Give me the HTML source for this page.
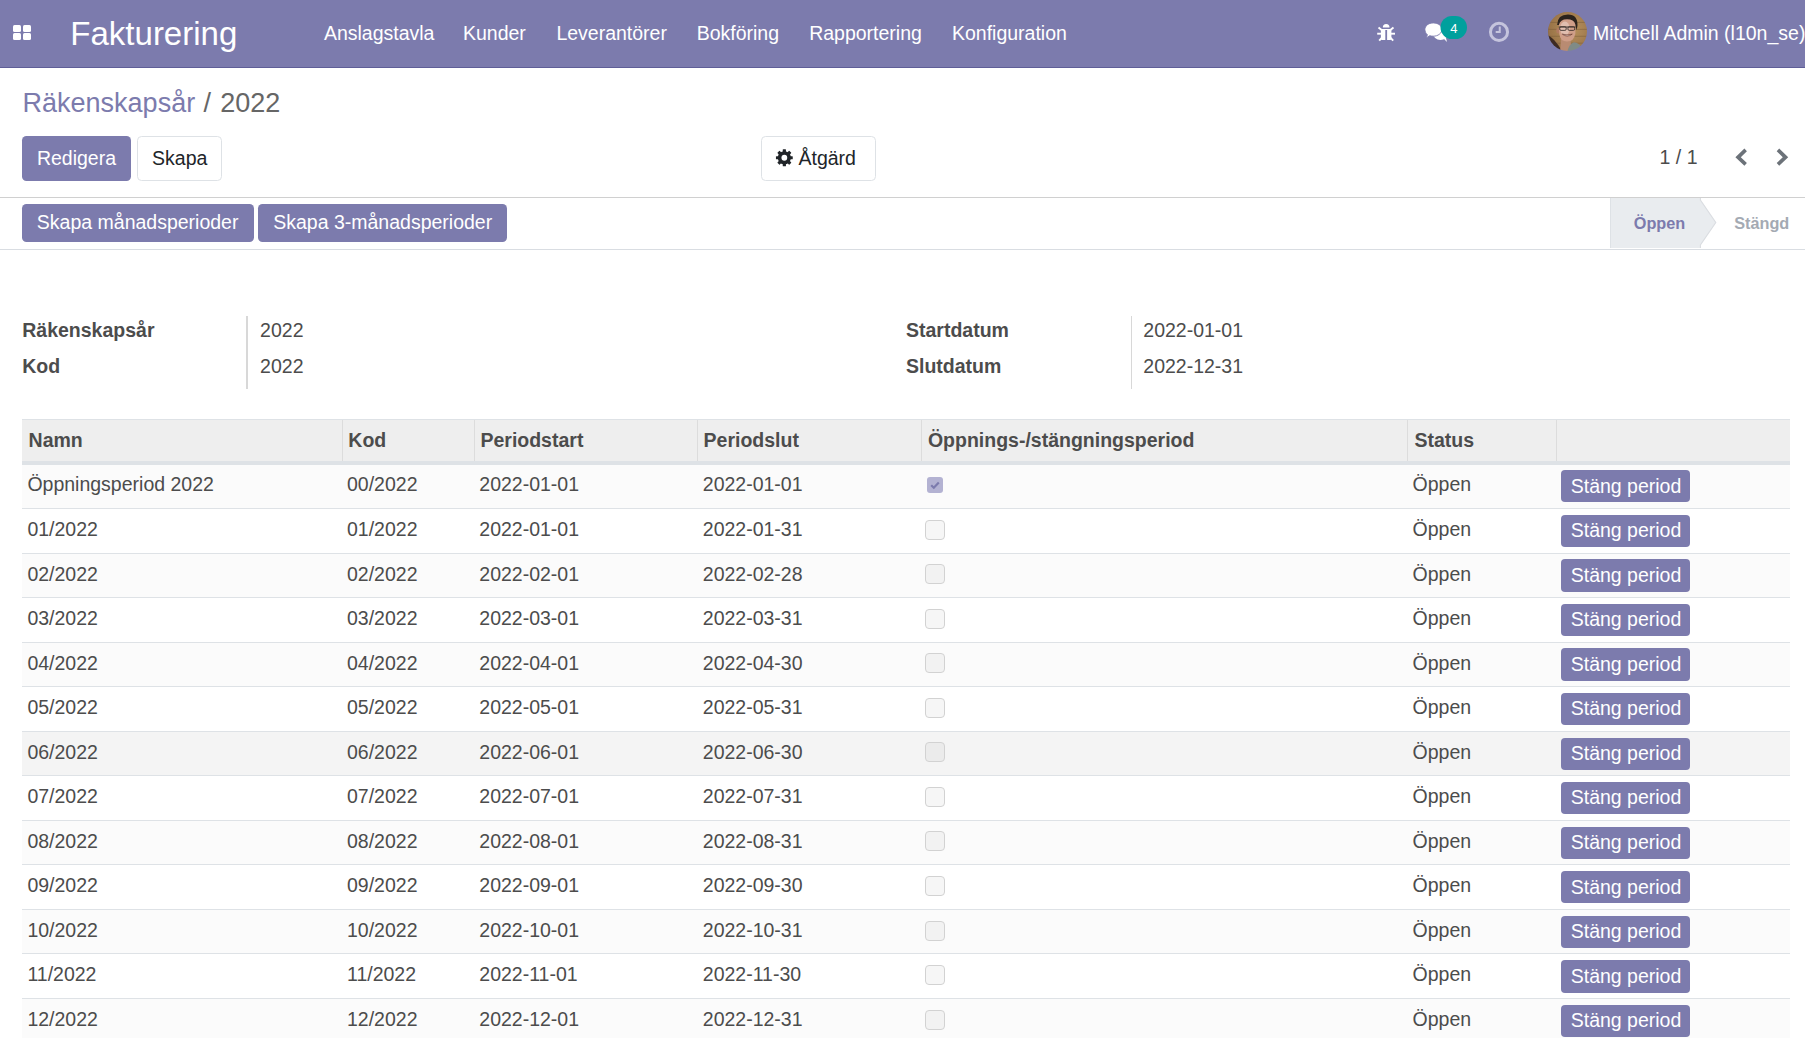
<!DOCTYPE html>
<html><head><meta charset="utf-8"><style>
html,body{margin:0;padding:0;background:#fff;width:1805px;height:1038px;overflow:hidden;position:relative}
body{font-family:"Liberation Sans",sans-serif}
.t{position:absolute;white-space:nowrap}
.r{position:absolute}
</style></head><body>
<div class="r" style="left:0px;top:0px;width:1805.00px;height:67.00px;background:#7c7bad"></div>
<div class="r" style="left:0px;top:67px;width:1805.00px;height:1.00px;background:#5f5e97"></div>
<div class="r" style="left:12.8px;top:24.9px;width:8.60px;height:6.90px;background:#fff;border-radius:1.5px"></div>
<div class="r" style="left:22.9px;top:24.9px;width:8.60px;height:6.90px;background:#fff;border-radius:1.5px"></div>
<div class="r" style="left:12.8px;top:33.1px;width:8.60px;height:6.90px;background:#fff;border-radius:1.5px"></div>
<div class="r" style="left:22.9px;top:33.1px;width:8.60px;height:6.90px;background:#fff;border-radius:1.5px"></div>
<div class="t" style="left:70.35px;top:14.00px;font-size:33px;line-height:39.6px;color:#fff;">Fakturering</div>
<div class="t" style="left:323.90px;top:22.00px;font-size:19.5px;line-height:23.4px;color:#fff;">Anslagstavla</div>
<div class="t" style="left:462.98px;top:22.00px;font-size:19.5px;line-height:23.4px;color:#fff;">Kunder</div>
<div class="t" style="left:556.38px;top:22.00px;font-size:19.5px;line-height:23.4px;color:#fff;">Leverantörer</div>
<div class="t" style="left:696.67px;top:22.00px;font-size:19.5px;line-height:23.4px;color:#fff;">Bokföring</div>
<div class="t" style="left:809.17px;top:22.00px;font-size:19.5px;line-height:23.4px;color:#fff;">Rapportering</div>
<div class="t" style="left:951.98px;top:22.00px;font-size:19.5px;line-height:23.4px;color:#fff;">Konfiguration</div>
<div class="t" style="left:1592.97px;top:22.00px;font-size:19.5px;line-height:23.4px;color:#fff;white-space:nowrap">Mitchell Admin (l10n_se)</div>
<svg class="r" style="left:1372px;top:18px" width="28" height="28" viewBox="0 0 28 28"><path d="M10.8 9.6 A3.35 3.6 0 0 1 17.5 9.6 Z" fill="#fff"/><path d="M8.9 10.9 H19.4 V20.6 Q19.4 21.9 18.3 21.9 H9.9 Q8.9 21.9 8.9 20.6 Z" fill="#fff"/><rect x="13.3" y="12" width="1.8" height="10" fill="#7c7bad"/><g stroke="#fff" stroke-width="1.9" stroke-linecap="butt"><line x1="6.5" y1="9.4" x2="10" y2="12.2"/><line x1="21.5" y1="9.4" x2="18" y2="12.2"/><line x1="5.2" y1="15.7" x2="9.5" y2="15.7"/><line x1="23" y1="15.7" x2="18.8" y2="15.7"/><line x1="7.2" y1="22.6" x2="10" y2="19.6"/><line x1="21.2" y1="22.6" x2="18.4" y2="19.6"/></g></svg>
<svg class="r" style="left:1420px;top:14px" width="50" height="32" viewBox="0 0 50 32"><ellipse cx="20.5" cy="19.6" rx="7.6" ry="6.3" fill="#fff"/><path d="M23 24 L27 28 L25.5 22 Z" fill="#fff"/><path d="M13.2 8.9 C18.5 8.9 21.9 11.9 21.9 15.5 C21.9 19.3 18 22.2 13.2 22.2 C12 22.2 10.8 22 9.7 21.7 L6.3 23.9 L7.4 20.7 C5.9 19.4 4.9 17.6 4.9 15.5 C4.9 11.9 8.5 8.9 13.2 8.9 Z" fill="#fff" stroke="#7c7bad" stroke-width="0.9"/><rect x="20.5" y="2" width="26.5" height="23" rx="11.5" fill="#00a09d"/><text x="33.9" y="18.6" text-anchor="middle" font-family="Liberation Sans" font-size="13" fill="#fff">4</text></svg>
<svg class="r" style="left:1484px;top:17px" width="30" height="30" viewBox="0 0 30 30"><circle cx="15" cy="14.9" r="8.55" fill="none" stroke="#c5c4dd" stroke-width="3"/><path d="M15.75 9.4 V15.1 H11.7" fill="none" stroke="#c5c4dd" stroke-width="2"/></svg>
<svg class="r" style="left:1548px;top:11.7px" width="39" height="39" viewBox="0 0 45 45"><defs><clipPath id="av"><circle cx="22.5" cy="22.5" r="22.5"/></clipPath><radialGradient id="avbg" cx="0.6" cy="0.45" r="0.7"><stop offset="0" stop-color="#b8925e"/><stop offset="0.75" stop-color="#9a7448"/><stop offset="1" stop-color="#5e4128"/></radialGradient><filter id="bl" x="-10%" y="-10%" width="120%" height="120%"><feGaussianBlur stdDeviation="0.8"/></filter></defs><g clip-path="url(#av)"><g filter="url(#bl)"><rect x="-2" y="-2" width="49" height="49" fill="url(#avbg)"/><g stroke="#7a5a38" stroke-width="1" opacity="0.6"><line x1="0" y1="12" x2="45" y2="12"/><line x1="0" y1="20" x2="45" y2="20"/><line x1="0" y1="28" x2="45" y2="28"/><line x1="0" y1="36" x2="45" y2="36"/></g><path d="M-2 26 Q8 30 16 45 H-2 Z" fill="#3e2c20"/><path d="M15 30 H26 L27 47 H14 Z" fill="#b98b72"/><path d="M22 47 Q24 37 30 35 Q37 35 42 47 Z" fill="#7f8b87"/><ellipse cx="11.5" cy="21.5" rx="2" ry="3.2" fill="#b07a60"/><path d="M12.5 13 Q13 6 22 6 Q31.5 6 32 14 L31.5 25 Q30 34 22 34 Q14 34 13 25 Z" fill="#cf9e88"/><ellipse cx="19.5" cy="19" rx="5.5" ry="8" fill="#e6c8bc" opacity="0.75"/><path d="M10.5 15 Q11 3 23 3 Q34.5 3 34 16 L33 21 L31.5 14 Q30 8.5 22 8.5 Q14 8.5 12.5 15 Z" fill="#2a201b"/><path d="M12.5 17.3 H32" stroke="#3a302c" stroke-width="1.1"/><rect x="13.5" y="17" width="7.5" height="4.2" rx="1.5" fill="none" stroke="#3a302c" stroke-width="1"/><rect x="23" y="17" width="7.8" height="4.2" rx="1.5" fill="none" stroke="#3a302c" stroke-width="1"/><path d="M16.5 25.5 Q22 30 28 25.5 Q22 27.5 16.5 25.5 Z" fill="#f6ece6" stroke="#6a3a30" stroke-width="0.8"/></g></g></svg>
<svg class="r" style="left:772px;top:145.4px;z-index:5" width="25" height="25" viewBox="0 0 25 25"><g fill="#212529" transform="translate(12.35 12.75)"><circle r="6.6"/><rect x="-1.6" y="-8.4" width="3.2" height="4" rx="0.5" transform="rotate(0)"/><rect x="-1.6" y="-8.4" width="3.2" height="4" rx="0.5" transform="rotate(45)"/><rect x="-1.6" y="-8.4" width="3.2" height="4" rx="0.5" transform="rotate(90)"/><rect x="-1.6" y="-8.4" width="3.2" height="4" rx="0.5" transform="rotate(135)"/><rect x="-1.6" y="-8.4" width="3.2" height="4" rx="0.5" transform="rotate(180)"/><rect x="-1.6" y="-8.4" width="3.2" height="4" rx="0.5" transform="rotate(225)"/><rect x="-1.6" y="-8.4" width="3.2" height="4" rx="0.5" transform="rotate(270)"/><rect x="-1.6" y="-8.4" width="3.2" height="4" rx="0.5" transform="rotate(315)"/><circle r="2.9" fill="#fff"/></g></svg>
<svg class="r" style="left:1730px;top:145px" width="65" height="25" viewBox="1730 145 65 25"><polygon points="1735.4,157.2 1744.4,148.6 1746.9,151.2 1740.8,157.2 1746.9,163.1 1744.4,165.8" fill="#6c7279"/><polygon points="1788.2,157.2 1779.2,148.6 1776.7,151.2 1782.8,157.2 1776.7,163.1 1779.2,165.8" fill="#6c7279"/></svg>
<div class="t" style="left:22.55px;top:87.00px;font-size:27px;line-height:32.4px;color:#7c7bad;">Räkenskapsår</div>
<div class="t" style="left:203.60px;top:87.00px;font-size:27px;line-height:32.4px;color:#666666;">/</div>
<div class="t" style="left:220.18px;top:87.00px;font-size:27px;line-height:32.4px;color:#666666;">2022</div>
<div class="r" style="left:22px;top:136px;width:109.00px;height:45.00px;background:#7c7bad;border-radius:4.5px"></div>
<div class="t" style="left:36.88px;top:147.00px;font-size:19.5px;line-height:23.4px;color:#fff;">Redigera</div>
<div class="r" style="left:137px;top:136px;width:85.00px;height:45.00px;background:#fff;border:1px solid #dee2e6;box-sizing:border-box;border-radius:4.5px"></div>
<div class="t" style="left:152.12px;top:147.00px;font-size:19.5px;line-height:23.4px;color:#212529;">Skapa</div>
<div class="r" style="left:761px;top:136px;width:115.00px;height:45.00px;background:#fff;border:1px solid #dee2e6;box-sizing:border-box;border-radius:4.5px"></div>
<div class="t" style="left:798.50px;top:147.00px;font-size:19.5px;line-height:23.4px;color:#212529;">Åtgärd</div>
<div class="t" style="left:1659.60px;top:146.00px;font-size:19.5px;line-height:23.4px;color:#4c4c4c;">1 / 1</div>
<div class="r" style="left:0px;top:197px;width:1805.00px;height:1.00px;background:#d0d0d0"></div>
<div class="r" style="left:0px;top:249px;width:1805.00px;height:1.00px;background:#d9dde2"></div>
<div class="r" style="left:22px;top:204px;width:232.00px;height:38.00px;background:#7c7bad;border-radius:4.5px"></div>
<div class="t" style="left:36.83px;top:211.00px;font-size:19.5px;line-height:23.4px;color:#fff;">Skapa månadsperioder</div>
<div class="r" style="left:258.3px;top:204px;width:248.30px;height:38.00px;background:#7c7bad;border-radius:4.5px"></div>
<div class="t" style="left:273.23px;top:211.00px;font-size:19.5px;line-height:23.4px;color:#fff;">Skapa 3-månadsperioder</div>
<svg class="r" style="left:1600px;top:198px" width="205" height="51"><polygon points="10,0 100.4,0 100.4,2 115.8,24.5 100.4,47 100.4,50 10,50" fill="#e9ecef"/><polyline points="10.5,0 10.5,50" stroke="#dee2e6" stroke-width="1" fill="none"/><polyline points="100.4,0 100.4,2 115.8,24.5 100.4,47 100.4,50" stroke="#dadde1" stroke-width="1.1" fill="none"/></svg>
<div class="t" style="left:1633.78px;top:214.00px;font-size:16.25px;line-height:19.5px;color:#7c7bad;font-weight:bold;">Öppen</div>
<div class="t" style="left:1734.20px;top:214.00px;font-size:16.25px;line-height:19.5px;color:#a4aab3;font-weight:bold;">Stängd</div>
<div class="t" style="left:22.25px;top:319.00px;font-size:19.5px;line-height:23.4px;color:#4c4c4c;font-weight:bold;">Räkenskapsår</div>
<div class="t" style="left:22.25px;top:355.00px;font-size:19.5px;line-height:23.4px;color:#4c4c4c;font-weight:bold;">Kod</div>
<div class="t" style="left:260.10px;top:319.00px;font-size:19.5px;line-height:23.4px;color:#4c4c4c;">2022</div>
<div class="t" style="left:260.10px;top:355.00px;font-size:19.5px;line-height:23.4px;color:#4c4c4c;">2022</div>
<div class="r" style="left:246px;top:316px;width:1.50px;height:73.00px;background:#d8d8d8"></div>
<div class="t" style="left:905.98px;top:319.00px;font-size:19.5px;line-height:23.4px;color:#4c4c4c;font-weight:bold;">Startdatum</div>
<div class="t" style="left:905.98px;top:355.00px;font-size:19.5px;line-height:23.4px;color:#4c4c4c;font-weight:bold;">Slutdatum</div>
<div class="t" style="left:1143.30px;top:319.00px;font-size:19.5px;line-height:23.4px;color:#4c4c4c;">2022-01-01</div>
<div class="t" style="left:1143.30px;top:355.00px;font-size:19.5px;line-height:23.4px;color:#4c4c4c;">2022-12-31</div>
<div class="r" style="left:1130.5px;top:316px;width:1.50px;height:73.00px;background:#d8d8d8"></div>
<div class="r" style="left:22px;top:419px;width:1768.00px;height:42.00px;background:#eeeeee;border-top:1px solid #dee2e6;box-sizing:border-box"></div>
<div class="r" style="left:22px;top:461px;width:1768.00px;height:4.00px;background:#dee2e6"></div>
<div class="r" style="left:342px;top:420px;width:1.00px;height:41.00px;background:#dcdcdc"></div>
<div class="r" style="left:474px;top:420px;width:1.00px;height:41.00px;background:#dcdcdc"></div>
<div class="r" style="left:697px;top:420px;width:1.00px;height:41.00px;background:#dcdcdc"></div>
<div class="r" style="left:921px;top:420px;width:1.00px;height:41.00px;background:#dcdcdc"></div>
<div class="r" style="left:1407px;top:420px;width:1.00px;height:41.00px;background:#dcdcdc"></div>
<div class="r" style="left:1556px;top:420px;width:1.00px;height:41.00px;background:#dcdcdc"></div>
<div class="t" style="left:28.55px;top:429.00px;font-size:19.5px;line-height:23.4px;color:#4c4c4c;font-weight:bold;">Namn</div>
<div class="t" style="left:348.35px;top:429.00px;font-size:19.5px;line-height:23.4px;color:#4c4c4c;font-weight:bold;">Kod</div>
<div class="t" style="left:480.45px;top:429.00px;font-size:19.5px;line-height:23.4px;color:#4c4c4c;font-weight:bold;">Periodstart</div>
<div class="t" style="left:703.55px;top:429.00px;font-size:19.5px;line-height:23.4px;color:#4c4c4c;font-weight:bold;">Periodslut</div>
<div class="t" style="left:927.95px;top:429.00px;font-size:19.5px;line-height:23.4px;color:#4c4c4c;font-weight:bold;">Öppnings-/stängningsperiod</div>
<div class="t" style="left:1414.47px;top:429.00px;font-size:19.5px;line-height:23.4px;color:#4c4c4c;font-weight:bold;">Status</div>
<div class="r" style="left:22px;top:465px;width:1768.00px;height:43.00px;background:#fbfbfb"></div>
<div class="r" style="left:22px;top:508px;width:1768.00px;height:1.00px;background:#dee2e6"></div>
<div class="t" style="left:27.40px;top:473.00px;font-size:19.5px;line-height:23.4px;color:#4c4c4c;">Öppningsperiod 2022</div>
<div class="t" style="left:347.00px;top:473.00px;font-size:19.5px;line-height:23.4px;color:#4c4c4c;">00/2022</div>
<div class="t" style="left:479.30px;top:473.00px;font-size:19.5px;line-height:23.4px;color:#4c4c4c;">2022-01-01</div>
<div class="t" style="left:702.80px;top:473.00px;font-size:19.5px;line-height:23.4px;color:#4c4c4c;">2022-01-01</div>
<div class="t" style="left:1412.60px;top:473.00px;font-size:19.5px;line-height:23.4px;color:#4c4c4c;">Öppen</div>
<svg class="r" style="left:927px;top:477.00px" width="16" height="16"><rect x="0" y="0" width="16" height="16" rx="3" fill="#b3b2d2"/><path d="M4.2 8.3 L6.8 10.8 L11.8 5.6" stroke="#7c7bad" stroke-width="2.2" fill="none"/></svg>
<div class="r" style="left:1561px;top:470.2px;width:129.00px;height:32.30px;background:#7c7bad;border-radius:4px"></div>
<div class="t" style="left:1570.72px;top:475.00px;font-size:19.5px;line-height:23.4px;color:#fff;">Stäng period</div>
<div class="r" style="left:22px;top:509px;width:1768.00px;height:44.00px;background:#ffffff"></div>
<div class="r" style="left:22px;top:553px;width:1768.00px;height:1.00px;background:#dee2e6"></div>
<div class="t" style="left:27.40px;top:518.00px;font-size:19.5px;line-height:23.4px;color:#4c4c4c;">01/2022</div>
<div class="t" style="left:347.00px;top:518.00px;font-size:19.5px;line-height:23.4px;color:#4c4c4c;">01/2022</div>
<div class="t" style="left:479.30px;top:518.00px;font-size:19.5px;line-height:23.4px;color:#4c4c4c;">2022-01-01</div>
<div class="t" style="left:702.80px;top:518.00px;font-size:19.5px;line-height:23.4px;color:#4c4c4c;">2022-01-31</div>
<div class="t" style="left:1412.60px;top:518.00px;font-size:19.5px;line-height:23.4px;color:#4c4c4c;">Öppen</div>
<div class="r" style="left:925px;top:520px;width:19.5px;height:19.5px;box-sizing:border-box;border:1px solid #d2d2d2;border-radius:4px;background:rgba(0,0,0,0.035)"></div>
<div class="r" style="left:1561px;top:514.75px;width:129.00px;height:32.30px;background:#7c7bad;border-radius:4px"></div>
<div class="t" style="left:1570.72px;top:519.00px;font-size:19.5px;line-height:23.4px;color:#fff;">Stäng period</div>
<div class="r" style="left:22px;top:554px;width:1768.00px;height:43.00px;background:#fbfbfb"></div>
<div class="r" style="left:22px;top:597px;width:1768.00px;height:1.00px;background:#dee2e6"></div>
<div class="t" style="left:27.40px;top:563.00px;font-size:19.5px;line-height:23.4px;color:#4c4c4c;">02/2022</div>
<div class="t" style="left:347.00px;top:563.00px;font-size:19.5px;line-height:23.4px;color:#4c4c4c;">02/2022</div>
<div class="t" style="left:479.30px;top:563.00px;font-size:19.5px;line-height:23.4px;color:#4c4c4c;">2022-02-01</div>
<div class="t" style="left:702.80px;top:563.00px;font-size:19.5px;line-height:23.4px;color:#4c4c4c;">2022-02-28</div>
<div class="t" style="left:1412.60px;top:563.00px;font-size:19.5px;line-height:23.4px;color:#4c4c4c;">Öppen</div>
<div class="r" style="left:925px;top:564px;width:19.5px;height:19.5px;box-sizing:border-box;border:1px solid #d2d2d2;border-radius:4px;background:rgba(0,0,0,0.035)"></div>
<div class="r" style="left:1561px;top:559.3px;width:129.00px;height:32.30px;background:#7c7bad;border-radius:4px"></div>
<div class="t" style="left:1570.72px;top:564.00px;font-size:19.5px;line-height:23.4px;color:#fff;">Stäng period</div>
<div class="r" style="left:22px;top:598px;width:1768.00px;height:44.00px;background:#ffffff"></div>
<div class="r" style="left:22px;top:642px;width:1768.00px;height:1.00px;background:#dee2e6"></div>
<div class="t" style="left:27.40px;top:607.00px;font-size:19.5px;line-height:23.4px;color:#4c4c4c;">03/2022</div>
<div class="t" style="left:347.00px;top:607.00px;font-size:19.5px;line-height:23.4px;color:#4c4c4c;">03/2022</div>
<div class="t" style="left:479.30px;top:607.00px;font-size:19.5px;line-height:23.4px;color:#4c4c4c;">2022-03-01</div>
<div class="t" style="left:702.80px;top:607.00px;font-size:19.5px;line-height:23.4px;color:#4c4c4c;">2022-03-31</div>
<div class="t" style="left:1412.60px;top:607.00px;font-size:19.5px;line-height:23.4px;color:#4c4c4c;">Öppen</div>
<div class="r" style="left:925px;top:609px;width:19.5px;height:19.5px;box-sizing:border-box;border:1px solid #d2d2d2;border-radius:4px;background:rgba(0,0,0,0.035)"></div>
<div class="r" style="left:1561px;top:603.8499999999999px;width:129.00px;height:32.30px;background:#7c7bad;border-radius:4px"></div>
<div class="t" style="left:1570.72px;top:608.00px;font-size:19.5px;line-height:23.4px;color:#fff;">Stäng period</div>
<div class="r" style="left:22px;top:643px;width:1768.00px;height:43.00px;background:#fbfbfb"></div>
<div class="r" style="left:22px;top:686px;width:1768.00px;height:1.00px;background:#dee2e6"></div>
<div class="t" style="left:27.40px;top:652.00px;font-size:19.5px;line-height:23.4px;color:#4c4c4c;">04/2022</div>
<div class="t" style="left:347.00px;top:652.00px;font-size:19.5px;line-height:23.4px;color:#4c4c4c;">04/2022</div>
<div class="t" style="left:479.30px;top:652.00px;font-size:19.5px;line-height:23.4px;color:#4c4c4c;">2022-04-01</div>
<div class="t" style="left:702.80px;top:652.00px;font-size:19.5px;line-height:23.4px;color:#4c4c4c;">2022-04-30</div>
<div class="t" style="left:1412.60px;top:652.00px;font-size:19.5px;line-height:23.4px;color:#4c4c4c;">Öppen</div>
<div class="r" style="left:925px;top:653px;width:19.5px;height:19.5px;box-sizing:border-box;border:1px solid #d2d2d2;border-radius:4px;background:rgba(0,0,0,0.035)"></div>
<div class="r" style="left:1561px;top:648.4px;width:129.00px;height:32.30px;background:#7c7bad;border-radius:4px"></div>
<div class="t" style="left:1570.72px;top:653.00px;font-size:19.5px;line-height:23.4px;color:#fff;">Stäng period</div>
<div class="r" style="left:22px;top:687px;width:1768.00px;height:44.00px;background:#ffffff"></div>
<div class="r" style="left:22px;top:731px;width:1768.00px;height:1.00px;background:#dee2e6"></div>
<div class="t" style="left:27.40px;top:696.00px;font-size:19.5px;line-height:23.4px;color:#4c4c4c;">05/2022</div>
<div class="t" style="left:347.00px;top:696.00px;font-size:19.5px;line-height:23.4px;color:#4c4c4c;">05/2022</div>
<div class="t" style="left:479.30px;top:696.00px;font-size:19.5px;line-height:23.4px;color:#4c4c4c;">2022-05-01</div>
<div class="t" style="left:702.80px;top:696.00px;font-size:19.5px;line-height:23.4px;color:#4c4c4c;">2022-05-31</div>
<div class="t" style="left:1412.60px;top:696.00px;font-size:19.5px;line-height:23.4px;color:#4c4c4c;">Öppen</div>
<div class="r" style="left:925px;top:698px;width:19.5px;height:19.5px;box-sizing:border-box;border:1px solid #d2d2d2;border-radius:4px;background:rgba(0,0,0,0.035)"></div>
<div class="r" style="left:1561px;top:692.95px;width:129.00px;height:32.30px;background:#7c7bad;border-radius:4px"></div>
<div class="t" style="left:1570.72px;top:697.00px;font-size:19.5px;line-height:23.4px;color:#fff;">Stäng period</div>
<div class="r" style="left:22px;top:732px;width:1768.00px;height:43.00px;background:#f4f4f4"></div>
<div class="r" style="left:22px;top:775px;width:1768.00px;height:1.00px;background:#dee2e6"></div>
<div class="t" style="left:27.40px;top:741.00px;font-size:19.5px;line-height:23.4px;color:#4c4c4c;">06/2022</div>
<div class="t" style="left:347.00px;top:741.00px;font-size:19.5px;line-height:23.4px;color:#4c4c4c;">06/2022</div>
<div class="t" style="left:479.30px;top:741.00px;font-size:19.5px;line-height:23.4px;color:#4c4c4c;">2022-06-01</div>
<div class="t" style="left:702.80px;top:741.00px;font-size:19.5px;line-height:23.4px;color:#4c4c4c;">2022-06-30</div>
<div class="t" style="left:1412.60px;top:741.00px;font-size:19.5px;line-height:23.4px;color:#4c4c4c;">Öppen</div>
<div class="r" style="left:925px;top:742px;width:19.5px;height:19.5px;box-sizing:border-box;border:1px solid #d2d2d2;border-radius:4px;background:rgba(0,0,0,0.035)"></div>
<div class="r" style="left:1561px;top:737.5px;width:129.00px;height:32.30px;background:#7c7bad;border-radius:4px"></div>
<div class="t" style="left:1570.72px;top:742.00px;font-size:19.5px;line-height:23.4px;color:#fff;">Stäng period</div>
<div class="r" style="left:22px;top:776px;width:1768.00px;height:44.00px;background:#ffffff"></div>
<div class="r" style="left:22px;top:820px;width:1768.00px;height:1.00px;background:#dee2e6"></div>
<div class="t" style="left:27.40px;top:785.00px;font-size:19.5px;line-height:23.4px;color:#4c4c4c;">07/2022</div>
<div class="t" style="left:347.00px;top:785.00px;font-size:19.5px;line-height:23.4px;color:#4c4c4c;">07/2022</div>
<div class="t" style="left:479.30px;top:785.00px;font-size:19.5px;line-height:23.4px;color:#4c4c4c;">2022-07-01</div>
<div class="t" style="left:702.80px;top:785.00px;font-size:19.5px;line-height:23.4px;color:#4c4c4c;">2022-07-31</div>
<div class="t" style="left:1412.60px;top:785.00px;font-size:19.5px;line-height:23.4px;color:#4c4c4c;">Öppen</div>
<div class="r" style="left:925px;top:787px;width:19.5px;height:19.5px;box-sizing:border-box;border:1px solid #d2d2d2;border-radius:4px;background:rgba(0,0,0,0.035)"></div>
<div class="r" style="left:1561px;top:782.05px;width:129.00px;height:32.30px;background:#7c7bad;border-radius:4px"></div>
<div class="t" style="left:1570.72px;top:786.00px;font-size:19.5px;line-height:23.4px;color:#fff;">Stäng period</div>
<div class="r" style="left:22px;top:821px;width:1768.00px;height:43.00px;background:#fbfbfb"></div>
<div class="r" style="left:22px;top:864px;width:1768.00px;height:1.00px;background:#dee2e6"></div>
<div class="t" style="left:27.40px;top:830.00px;font-size:19.5px;line-height:23.4px;color:#4c4c4c;">08/2022</div>
<div class="t" style="left:347.00px;top:830.00px;font-size:19.5px;line-height:23.4px;color:#4c4c4c;">08/2022</div>
<div class="t" style="left:479.30px;top:830.00px;font-size:19.5px;line-height:23.4px;color:#4c4c4c;">2022-08-01</div>
<div class="t" style="left:702.80px;top:830.00px;font-size:19.5px;line-height:23.4px;color:#4c4c4c;">2022-08-31</div>
<div class="t" style="left:1412.60px;top:830.00px;font-size:19.5px;line-height:23.4px;color:#4c4c4c;">Öppen</div>
<div class="r" style="left:925px;top:831px;width:19.5px;height:19.5px;box-sizing:border-box;border:1px solid #d2d2d2;border-radius:4px;background:rgba(0,0,0,0.035)"></div>
<div class="r" style="left:1561px;top:826.5999999999999px;width:129.00px;height:32.30px;background:#7c7bad;border-radius:4px"></div>
<div class="t" style="left:1570.72px;top:831.00px;font-size:19.5px;line-height:23.4px;color:#fff;">Stäng period</div>
<div class="r" style="left:22px;top:865px;width:1768.00px;height:44.00px;background:#ffffff"></div>
<div class="r" style="left:22px;top:909px;width:1768.00px;height:1.00px;background:#dee2e6"></div>
<div class="t" style="left:27.40px;top:874.00px;font-size:19.5px;line-height:23.4px;color:#4c4c4c;">09/2022</div>
<div class="t" style="left:347.00px;top:874.00px;font-size:19.5px;line-height:23.4px;color:#4c4c4c;">09/2022</div>
<div class="t" style="left:479.30px;top:874.00px;font-size:19.5px;line-height:23.4px;color:#4c4c4c;">2022-09-01</div>
<div class="t" style="left:702.80px;top:874.00px;font-size:19.5px;line-height:23.4px;color:#4c4c4c;">2022-09-30</div>
<div class="t" style="left:1412.60px;top:874.00px;font-size:19.5px;line-height:23.4px;color:#4c4c4c;">Öppen</div>
<div class="r" style="left:925px;top:876px;width:19.5px;height:19.5px;box-sizing:border-box;border:1px solid #d2d2d2;border-radius:4px;background:rgba(0,0,0,0.035)"></div>
<div class="r" style="left:1561px;top:871.15px;width:129.00px;height:32.30px;background:#7c7bad;border-radius:4px"></div>
<div class="t" style="left:1570.72px;top:876.00px;font-size:19.5px;line-height:23.4px;color:#fff;">Stäng period</div>
<div class="r" style="left:22px;top:910px;width:1768.00px;height:43.00px;background:#fbfbfb"></div>
<div class="r" style="left:22px;top:953px;width:1768.00px;height:1.00px;background:#dee2e6"></div>
<div class="t" style="left:27.40px;top:919.00px;font-size:19.5px;line-height:23.4px;color:#4c4c4c;">10/2022</div>
<div class="t" style="left:347.00px;top:919.00px;font-size:19.5px;line-height:23.4px;color:#4c4c4c;">10/2022</div>
<div class="t" style="left:479.30px;top:919.00px;font-size:19.5px;line-height:23.4px;color:#4c4c4c;">2022-10-01</div>
<div class="t" style="left:702.80px;top:919.00px;font-size:19.5px;line-height:23.4px;color:#4c4c4c;">2022-10-31</div>
<div class="t" style="left:1412.60px;top:919.00px;font-size:19.5px;line-height:23.4px;color:#4c4c4c;">Öppen</div>
<div class="r" style="left:925px;top:921px;width:19.5px;height:19.5px;box-sizing:border-box;border:1px solid #d2d2d2;border-radius:4px;background:rgba(0,0,0,0.035)"></div>
<div class="r" style="left:1561px;top:915.7px;width:129.00px;height:32.30px;background:#7c7bad;border-radius:4px"></div>
<div class="t" style="left:1570.72px;top:920.00px;font-size:19.5px;line-height:23.4px;color:#fff;">Stäng period</div>
<div class="r" style="left:22px;top:954px;width:1768.00px;height:44.00px;background:#ffffff"></div>
<div class="r" style="left:22px;top:998px;width:1768.00px;height:1.00px;background:#dee2e6"></div>
<div class="t" style="left:27.40px;top:963.00px;font-size:19.5px;line-height:23.4px;color:#4c4c4c;">11/2022</div>
<div class="t" style="left:347.00px;top:963.00px;font-size:19.5px;line-height:23.4px;color:#4c4c4c;">11/2022</div>
<div class="t" style="left:479.30px;top:963.00px;font-size:19.5px;line-height:23.4px;color:#4c4c4c;">2022-11-01</div>
<div class="t" style="left:702.80px;top:963.00px;font-size:19.5px;line-height:23.4px;color:#4c4c4c;">2022-11-30</div>
<div class="t" style="left:1412.60px;top:963.00px;font-size:19.5px;line-height:23.4px;color:#4c4c4c;">Öppen</div>
<div class="r" style="left:925px;top:965px;width:19.5px;height:19.5px;box-sizing:border-box;border:1px solid #d2d2d2;border-radius:4px;background:rgba(0,0,0,0.035)"></div>
<div class="r" style="left:1561px;top:960.25px;width:129.00px;height:32.30px;background:#7c7bad;border-radius:4px"></div>
<div class="t" style="left:1570.72px;top:965.00px;font-size:19.5px;line-height:23.4px;color:#fff;">Stäng period</div>
<div class="r" style="left:22px;top:999px;width:1768.00px;height:44.00px;background:#fbfbfb"></div>
<div class="r" style="left:22px;top:1043px;width:1768.00px;height:1.00px;background:#dee2e6"></div>
<div class="t" style="left:27.40px;top:1008.00px;font-size:19.5px;line-height:23.4px;color:#4c4c4c;">12/2022</div>
<div class="t" style="left:347.00px;top:1008.00px;font-size:19.5px;line-height:23.4px;color:#4c4c4c;">12/2022</div>
<div class="t" style="left:479.30px;top:1008.00px;font-size:19.5px;line-height:23.4px;color:#4c4c4c;">2022-12-01</div>
<div class="t" style="left:702.80px;top:1008.00px;font-size:19.5px;line-height:23.4px;color:#4c4c4c;">2022-12-31</div>
<div class="t" style="left:1412.60px;top:1008.00px;font-size:19.5px;line-height:23.4px;color:#4c4c4c;">Öppen</div>
<div class="r" style="left:925px;top:1010px;width:19.5px;height:19.5px;box-sizing:border-box;border:1px solid #d2d2d2;border-radius:4px;background:rgba(0,0,0,0.035)"></div>
<div class="r" style="left:1561px;top:1004.8px;width:129.00px;height:32.30px;background:#7c7bad;border-radius:4px"></div>
<div class="t" style="left:1570.72px;top:1009.00px;font-size:19.5px;line-height:23.4px;color:#fff;">Stäng period</div>
</body></html>
